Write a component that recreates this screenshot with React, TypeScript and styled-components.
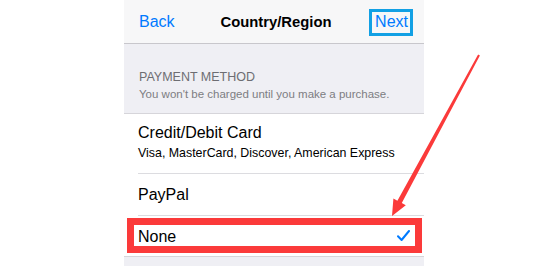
import styled, { createGlobalStyle } from 'styled-components'

const GlobalStyle = createGlobalStyle`
  html, body {
    margin: 0;
    padding: 0;
    background: #ffffff;
    overflow: hidden;
  }
  body {
    font-family: "Liberation Sans", Arial, sans-serif;
    -webkit-font-smoothing: antialiased;
  }
`

interface IRow {
  title: string
  detail?: string
  checked?: boolean
}

const rows: IRow[] = [
  { title: 'Credit/Debit Card', detail: 'Visa, MasterCard, Discover, American Express' },
  { title: 'PayPal' },
  { title: 'None', checked: true },
]

export default function App() {
  return (
    <Page>
      <GlobalStyle />
      <Phone>
        <NavBar>
          <NavButton>Back</NavButton>
          <NavTitle>Country/Region</NavTitle>
          <NavEnd>
            <HighlightedButton>Next</HighlightedButton>
          </NavEnd>
        </NavBar>
        <SectionHeader>
          <HeaderTitle>PAYMENT METHOD</HeaderTitle>
          <HeaderNote>You won't be charged until you make a purchase.</HeaderNote>
        </SectionHeader>
        <List>
          {rows.map((row, i) => (
            <Row key={row.title} $last={i === rows.length - 1} $tall={!!row.detail}>
              <RowText>
                <RowTitle>{row.title}</RowTitle>
                {row.detail && <RowDetail>{row.detail}</RowDetail>}
              </RowText>
              {row.checked && (
                <svg width="13" height="12" viewBox="0 0 13 12">
                  <path d="M1 6.3 L4.6 10 L12 1" fill="none" stroke="#007aff" strokeWidth="2" strokeLinecap="round" strokeLinejoin="round" />
                </svg>
              )}
            </Row>
          ))}
        </List>
        <HighlightBox />
      </Phone>
      <Arrow width="547" height="266" viewBox="0 0 547 266">
        <polygon
          points="479,55 479.9,55.5 401.8,203.1 405.8,205.2 392,216 393.4,198.6 397.4,200.7 478.1,54.5"
          fill="#fb3a3a"
        />
      </Arrow>
    </Page>
  )
}

const Page = styled.div`
  position: relative;
  width: 547px;
  height: 266px;
  padding-left: 124px;
  box-sizing: border-box;
`

const Phone = styled.div`
  position: relative;
  width: 300px;
  height: 266px;
  background: #efeff4;
`

const NavBar = styled.div`
  display: grid;
  grid-template-columns: 1fr auto 1fr;
  align-items: center;
  height: 43px;
  padding: 1px 11px 0 15px;
  box-sizing: border-box;
  background: #f7f7f8;
  border-bottom: 1px solid #c8c7cc;
  height: 44px;
`

const NavButton = styled.span`
  color: #007aff;
  font-size: 16px;
`

const NavTitle = styled.span`
  color: #000;
  font-size: 14.8px;
  font-weight: 700;
`

const NavEnd = styled.div`
  display: flex;
  justify-content: flex-end;
`

const HighlightedButton = styled.span`
  display: flex;
  align-items: center;
  height: 21px;
  padding: 0 2px 0 3px;
  border: 3px solid #12a0e4;
  color: #007aff;
  font-size: 16px;
`

const SectionHeader = styled.div`
  height: 70px;
  box-sizing: border-box;
  padding: 26px 15px 0;
  border-bottom: 1px solid #d6d5da;
`

const HeaderTitle = styled.div`
  color: #6d6d72;
  font-size: 12.5px;
  line-height: 15px;
`

const HeaderNote = styled.div`
  margin-top: 2px;
  color: #7d7d82;
  font-size: 11.5px;
  line-height: 14px;
`

const List = styled.div`
  background: #ffffff;
  padding-left: 14px;
  border-bottom: 1px solid #d6d5da;
`

const Row = styled.div<{ $last: boolean; $tall: boolean }>`
  display: flex;
  align-items: ${(p) => (p.$tall ? 'flex-start' : 'center')};
  justify-content: space-between;
  height: ${(p) => (p.$tall ? '60px' : p.$last ? '40px' : '42px')};
  box-sizing: border-box;
  padding: ${(p) => (p.$tall ? '9px 14px 0 0' : '0 14px 0 0')};
  border-bottom: ${(p) => (p.$last ? 'none' : '1px solid #dcdce0')};
`

const RowText = styled.div`
  display: flex;
  flex-direction: column;
`

const RowTitle = styled.span`
  color: #000;
  font-size: 16px;
  line-height: 19px;
`

const RowDetail = styled.span`
  margin-top: 4px;
  color: #000;
  font-size: 12.4px;
  line-height: 15px;
`

const HighlightBox = styled.div`
  position: absolute;
  left: 3px;
  top: 218px;
  width: 295px;
  height: 35px;
  box-sizing: border-box;
  border: 7px solid #fb3a3a;
`

const Arrow = styled.svg`
  position: absolute;
  left: 0;
  top: 0;
  pointer-events: none;
`
